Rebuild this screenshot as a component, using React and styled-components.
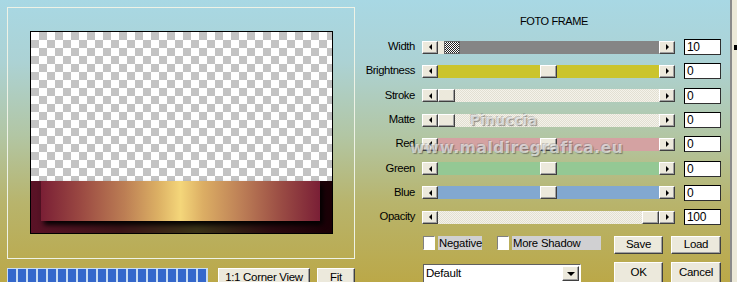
import React from "react";
import styled, { createGlobalStyle, css } from "styled-components";

const Global = createGlobalStyle`
  html, body {
    margin: 0;
    padding: 0;
    width: 737px;
    height: 282px;
    overflow: hidden;
  }
  body {
    font-family: "Liberation Sans", Arial, sans-serif;
    font-size: 11px;
    color: #000;
  }
`;

// VENTANA
const Ventana = styled.div`
  position: relative;
  display: flex;
  width: 737px;
  height: 282px;
  overflow: hidden;
  background: linear-gradient(
    to bottom,
    #a8d8e4 0%,
    #acd2d4 22%,
    #b2c6a4 48%,
    #b8b46c 72%,
    #bba848 100%
  );
`;

// PANEL IZQUIERDO
const PanelIzq = styled.div`
  width: 360px;
  flex: none;
  padding: 7px 0 0 7px;
  box-sizing: border-box;
`;

const Marco = styled.div`
  width: 348px;
  height: 252px;
  box-sizing: border-box;
  border: 1px solid #eef2e6;
  padding: 23px 0 0 22px;
`;

const Lienzo = styled.div`
  width: 303px;
  height: 203px;
  box-sizing: border-box;
  border: 1px solid #000;
  display: flex;
  flex-direction: column;
`;

const Cuadros = styled.div`
  height: 149px;
  background-color: #fff;
  background-image: conic-gradient(
    #c3c3c3 25%,
    #fff 0 50%,
    #c3c3c3 0 75%,
    #fff 0
  );
  background-size: 16px 16px;
`;

const Banda = styled.div`
  flex: 1;
  padding-left: 10px;
  background: linear-gradient(
    to right,
    #5a1226 0%,
    #3a1418 30%,
    #3a3418 55%,
    #2a0a10 80%,
    #1a0006 100%
  );
`;

const Oro = styled.div`
  width: 279px;
  height: 40px;
  background: linear-gradient(
    to right,
    #7a1f35 0%,
    #9a4842 14%,
    #bc7e54 30%,
    #dcb064 42%,
    #f4d67a 50%,
    #dcae64 58%,
    #bc7e56 72%,
    #9a4c44 86%,
    #7a1f36 100%
  );
  box-shadow: 3px 4px 5px rgba(0, 0, 0, 0.95);
`;

const BarraInferior = styled.div`
  display: flex;
  align-items: flex-start;
  margin-top: 9px;
`;

const Progreso = styled.div`
  width: 201px;
  height: 20px;
  box-sizing: border-box;
  background: #c8dcf2;
  padding: 1px 0 0 1px;
  display: flex;
  gap: 2px;
`;

const Celda = styled.div`
  width: 8px;
  height: 100%;
  background: #3468cc;
`;

const boton3d = css`
  box-sizing: border-box;
  background: #ece9dc;
  border: 1px solid;
  border-color: #fff #404040 #404040 #fff;
  box-shadow: inset -1px -1px 0 #a0a0a0;
  font-family: "Liberation Sans", Arial, sans-serif;
  font-size: 11.5px;
  letter-spacing: -0.3px;
  color: #000;
  display: flex;
  align-items: center;
  justify-content: center;
  padding: 0;
`;

const Boton = styled.button`
  ${boton3d};
  width: ${(p) => p.$w}px;
  height: ${(p) => p.$h || 18}px;
  margin-left: ${(p) => p.$ml || 0}px;
  padding-bottom: 1px;
`;

// PANEL DERECHO
const PanelDer = styled.div`
  position: relative;
  width: 370px;
  flex: none;
  padding-top: 14px;
  box-sizing: border-box;
`;

const Titulo = styled.div`
  height: 14px;
  line-height: 14px;
  margin-bottom: 7px;
  padding-left: 160px;
  letter-spacing: -0.4px;
  font-size: 11px;
`;

const Filas = styled.div`
  display: grid;
  grid-template-columns: 55px 260px 46px;
  grid-auto-rows: 24.3px;
  align-items: center;
`;

const Etiqueta = styled.div`
  text-align: right;
  letter-spacing: -0.4px;
  font-size: 11.3px;
  line-height: 13px;
  padding-bottom: 1px;
`;

const Barra = styled.div`
  margin-left: 7px;
  width: 253px;
  height: 13px;
  display: flex;
  position: relative;
`;

const Flecha = styled.div`
  ${boton3d};
  width: 16px;
  height: 13px;
  flex: none;
  &::after {
    content: "";
    width: 0;
    height: 0;
    border-top: 3px solid transparent;
    border-bottom: 3px solid transparent;
    ${(p) =>
      p.$dir === "l"
        ? "border-right: 3px solid #000;"
        : "border-left: 3px solid #000;"}
  }
`;

const tramado = css`
  background-color: #f4f2ea;
  background-image: conic-gradient(
    #e2dfd2 25%,
    transparent 0 50%,
    #e2dfd2 0 75%,
    transparent 0
  );
  background-size: 2px 2px;
`;

const Pista = styled.div`
  position: relative;
  flex: 1;
  ${(p) => (p.$color ? `background: ${p.$color};` : tramado)}
`;

const Hueco = styled.div`
  position: absolute;
  left: 0;
  top: 0;
  bottom: 0;
  width: 6px;
  background: #ece9dc;
`;

const Cursor = styled.div`
  position: absolute;
  top: 0;
  width: 17px;
  height: 13px;
  box-sizing: border-box;
  left: calc((100% - 17px) * ${(p) => p.$pos});
  ${(p) =>
    p.$dither
      ? css`
          left: 6px;
          width: 16px;
          background-color: #fff;
          background-image: conic-gradient(
            #222 25%,
            transparent 0 50%,
            #222 0 75%,
            transparent 0
          );
          background-size: 2px 2px;
          border: 1px solid #666;
        `
      : css`
          background: #ece9dc;
          border: 1px solid;
          border-color: #fff #404040 #404040 #fff;
          box-shadow: inset -1px -1px 0 #a0a0a0;
        `}
`;

const Valor = styled.div`
  margin-left: 9px;
  width: 37px;
  height: 16px;
  box-sizing: border-box;
  background: #fff;
  border: 1px solid;
  border-color: #000 #303030 #303030 #000;
  font-size: 12px;
  line-height: 14px;
  padding-left: 2px;
  letter-spacing: -0.3px;
`;

// PIE
const Pie = styled.div`
  display: flex;
  margin-top: 6.6px;
`;

const ColIzq = styled.div`
  width: 179px;
  padding-left: 63px;
`;

const FilaChecks = styled.div`
  display: flex;
  align-items: center;
  height: 14px;
`;

const Casilla = styled.div`
  width: 12px;
  height: 14px;
  box-sizing: border-box;
  background: #fff;
  border: 1px solid;
  border-color: #808080 #fff #fff #808080;
  margin-left: ${(p) => p.$ml || 0}px;
`;

const Rotulo = styled.div`
  background: #d0d0d2;
  height: 14px;
  line-height: 14px;
  width: ${(p) => p.$w}px;
  margin-left: 3px;
  padding-left: 1px;
  font-size: 11.3px;
  letter-spacing: -0.2px;
  box-sizing: border-box;
`;

const Selector = styled.div`
  margin-top: 14px;
  width: 158px;
  height: 22px;
  box-sizing: border-box;
  background: #fff;
  border: 1px solid;
  border-color: #606060 #fff #fff #606060;
  display: flex;
  align-items: flex-start;
  justify-content: space-between;
  padding: 2px 1px 0 2px;
  font-size: 11.5px;
  letter-spacing: -0.2px;
`;

const Desplegar = styled.div`
  ${boton3d};
  width: 17px;
  height: 15px;
  margin-top: -1px;
  &::after {
    content: "";
    border-left: 4px solid transparent;
    border-right: 4px solid transparent;
    border-top: 4px solid #000;
    margin-top: 2px;
  }
`;

const ColDer = styled.div`
  margin-left: 12px;
  display: grid;
  grid-template-columns: 49px 50px;
  column-gap: 8px;
  row-gap: 8px;
  align-content: start;
`;

const MarcaAgua = styled.div`
  position: absolute;
  left: ${(p) => p.$x}px;
  top: ${(p) => p.$y}px;
  font-family: "DejaVu Sans", sans-serif;
  font-weight: bold;
  font-size: ${(p) => p.$fs}px;
  letter-spacing: 0.5px;
  color: rgba(255, 255, 255, 0.6);
  text-shadow: 1px 1px 1px rgba(70, 70, 70, 0.55),
    -1px -1px 0 rgba(120, 120, 120, 0.35);
  pointer-events: none;
  white-space: nowrap;
`;

// BORDE DE VENTANA
const Borde = styled.div`
  flex: 1;
  background: #ece9d8;
  border-left: 2px solid #8a8a8a;
  position: relative;
  &::after {
    content: "";
    position: absolute;
    left: 2px;
    top: 45px;
    width: 6px;
    height: 5px;
    background: #000;
  }
`;

const sliders = [
  { label: "Width", value: "10", color: "#858585", dither: true },
  { label: "Brightness", value: "0", color: "#cbc42c", pos: 0.5 },
  { label: "Stroke", value: "0", pos: 0 },
  { label: "Matte", value: "0", pos: 0 },
  { label: "Red", value: "0", color: "#d4a2a2", pos: 0.5 },
  { label: "Green", value: "0", color: "#94c894", pos: 0.5 },
  { label: "Blue", value: "0", color: "#82a8d0", pos: 0.5 },
  { label: "Opacity", value: "100", pos: 1 },
];

const App = () => {
  return (
    <>
      <Global />
      <Ventana>
        <PanelIzq>
          <Marco>
            <Lienzo>
              <Cuadros />
              <Banda>
                <Oro />
              </Banda>
            </Lienzo>
          </Marco>
          <BarraInferior>
            <Progreso>
              {Array.from({ length: 20 }).map((_, i) => (
                <Celda key={i} />
              ))}
            </Progreso>
            <Boton $w={92} $h={19} $ml={10}>
              1:1 Corner View
            </Boton>
            <Boton $w={38} $h={19} $ml={7}>
              Fit
            </Boton>
          </BarraInferior>
        </PanelIzq>

        <PanelDer>
          <Titulo>FOTO FRAME</Titulo>
          <Filas>
            {sliders.map((s) => (
              <React.Fragment key={s.label}>
                <Etiqueta>{s.label}</Etiqueta>
                <Barra>
                  <Flecha $dir="l" />
                  <Pista $color={s.color}>
                    {s.dither && <Hueco />}
                    <Cursor $pos={s.pos || 0} $dither={s.dither} />
                  </Pista>
                  <Flecha $dir="r" />
                </Barra>
                <Valor>{s.value}</Valor>
              </React.Fragment>
            ))}
          </Filas>
          <Pie>
            <ColIzq>
              <FilaChecks>
                <Casilla />
                <Rotulo $w={44}>Negative</Rotulo>
                <Casilla $ml={15} />
                <Rotulo $w={89}>More Shadow</Rotulo>
              </FilaChecks>
              <Selector>
                <span>Default</span>
                <Desplegar />
              </Selector>
            </ColIzq>
            <ColDer>
              <Boton $w={49}>Save</Boton>
              <Boton $w={50}>Load</Boton>
              <Boton $w={49} $h={22}>
                OK
              </Boton>
              <Boton $w={50} $h={22}>
                Cancel
              </Boton>
            </ColDer>
          </Pie>
          <MarcaAgua $x={110} $y={112} $fs={13.5}>
            Pinuccia
          </MarcaAgua>
          <MarcaAgua $x={50} $y={139} $fs={15.5}>
            www.maldiregrafica.eu
          </MarcaAgua>
        </PanelDer>
        <Borde />
      </Ventana>
    </>
  );
};

export default App;
